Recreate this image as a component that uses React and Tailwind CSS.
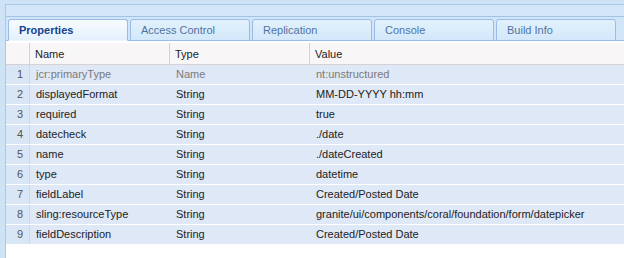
import React from 'react';

const tabs = ['Properties', 'Access Control', 'Replication', 'Console', 'Build Info'];

const rows = [
  { name: 'jcr:primaryType', type: 'Name', value: 'nt:unstructured', locked: true },
  { name: 'displayedFormat', type: 'String', value: 'MM-DD-YYYY hh:mm' },
  { name: 'required', type: 'String', value: 'true' },
  { name: 'datecheck', type: 'String', value: './date' },
  { name: 'name', type: 'String', value: './dateCreated' },
  { name: 'type', type: 'String', value: 'datetime' },
  { name: 'fieldLabel', type: 'String', value: 'Created/Posted Date' },
  { name: 'sling:resourceType', type: 'String', value: 'granite/ui/components/coral/foundation/form/datepicker' },
  { name: 'fieldDescription', type: 'String', value: 'Created/Posted Date' },
];

export default function App() {
  return (
    <div className="w-[624px] h-[258px] overflow-hidden bg-[#cfe3f6] pt-[4px] pl-[5px] font-['Liberation_Sans',Arial,sans-serif] text-[11px]">
      <div className="h-full flex flex-col border-l border-t border-[#a9c9e6] bg-white">
        {/* top strip */}
        <div className="h-[12px] bg-[#d4e7f8] border-b border-[#a3c5e5]" />

        {/* tab bar */}
        <div className="h-[24px] flex items-end gap-[2px] pl-[2px] bg-[#d0e5f8] border-b border-[#99bbe8]">
          {tabs.map((t, i) => {
            const active = i === 0;
            return (
              <div
                key={t}
                className={`w-[120px] h-[22px] -mb-px flex items-center pl-[10px] rounded-t-[3px] border border-[#99bbe8] ${
                  active
                    ? 'border-b-[#eef6fd] bg-gradient-to-b from-[#f7fbff] to-[#e3f1fc] text-[#15428b] font-bold'
                    : 'bg-gradient-to-b from-[#e2f1fc] to-[#d2e8fa] text-[#5273a0]'
                }`}
              >
                {t}
              </div>
            );
          })}
        </div>

        {/* grid */}
        <div className="flex-1 flex flex-col bg-white pt-[2px]">
          <div className="h-[22px] flex items-stretch bg-[#f9f6f8] border-b border-[#d8d0d4] text-[#222]">
            <div className="w-[24px] border-r border-[#d6d2d4]" />
            <div className="w-[140px] flex items-center pl-[5px] pt-[2px] border-r border-[#d6d2d4]">Name</div>
            <div className="w-[140px] flex items-center pl-[5px] pt-[2px] border-r border-[#d6d2d4]">Type</div>
            <div className="flex-1 flex items-center pl-[5px] pt-[2px]">Value</div>
          </div>
          {rows.map((r, i) => (
            <div
              key={r.name}
              className={`h-[20px] flex items-stretch bg-[#dfe8f6] border-b border-white ${
                r.locked ? 'text-[#7a7a7a]' : 'text-[#222]'
              }`}
            >
              <div className="w-[24px] flex items-center justify-end pr-[6px] bg-[#d9e6f5] border-r border-[#c4d8ee] text-[#555]">
                {i + 1}
              </div>
              <div className="w-[140px] flex items-center pl-[6px]">{r.name}</div>
              <div className="w-[140px] flex items-center pl-[6px]">{r.type}</div>
              <div className="flex-1 flex items-center pl-[6px] whitespace-nowrap">{r.value}</div>
            </div>
          ))}
        </div>
      </div>
    </div>
  );
}
